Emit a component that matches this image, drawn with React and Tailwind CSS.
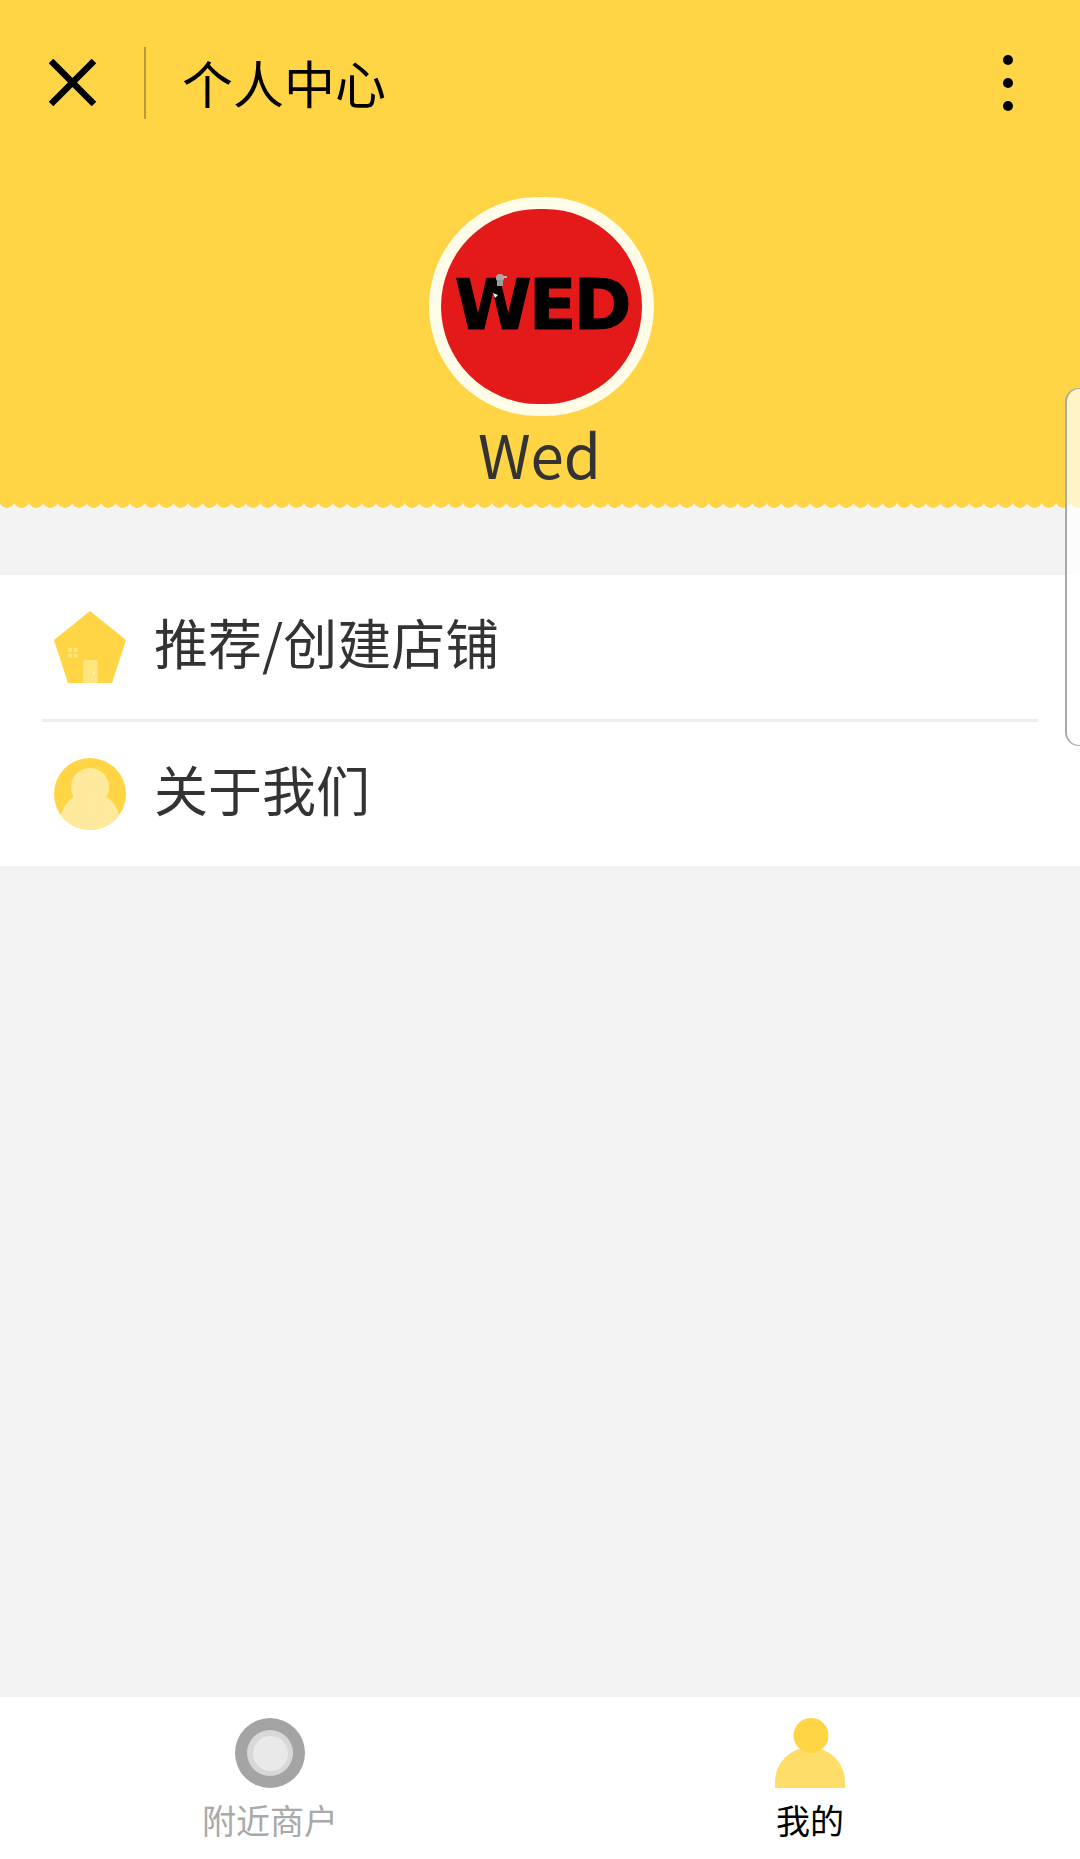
const cjk = { fontFamily: '"Noto Sans CJK SC", "Noto Sans", sans-serif' };

function Row({ icon, label }) {
  return (
    <div className="h-[144px] flex items-center pl-[54px]">
      {icon}
      <span className="ml-[28px] mb-[10px] text-[54px] leading-none text-[#333333]">{label}</span>
    </div>
  );
}

const HouseIcon = (
  <svg width="72" height="72" viewBox="0 0 72 72">
    <path d="M36 0 72 29 58 72H14L0 29Z" fill="#ffd546" />
    <rect x="29" y="49" width="15" height="23" rx="2" fill="#ffe680" />
    <circle cx="40" cy="62" r="1" fill="#fff6c8" />
    <g fill="#ffe680">
      <rect x="14" y="37" width="4" height="4" />
      <rect x="19.5" y="37" width="4" height="4" />
      <rect x="14" y="42.5" width="4" height="4" />
      <rect x="19.5" y="42.5" width="4" height="4" />
    </g>
  </svg>
);

const AboutIcon = (
  <svg width="72" height="72" viewBox="0 0 72 72">
    <defs>
      <clipPath id="about-clip"><circle cx="36" cy="36" r="36" /></clipPath>
    </defs>
    <circle cx="36" cy="36" r="36" fill="#ffd546" />
    <g clipPath="url(#about-clip)" fill="#ffe99d">
      <circle cx="36" cy="64" r="30" />
      <circle cx="36" cy="29" r="19" />
    </g>
  </svg>
);

export default function App() {
  return (
    <div className="relative h-[1859px] flex flex-col bg-[#f3f3f3] overflow-hidden" style={cjk}>
      <header className="h-[500px] bg-[#ffd546] flex flex-col shrink-0">
        <div className="h-[165px] flex items-center pl-[49px] pr-[67px] shrink-0">
          <svg width="47" height="47" viewBox="0 0 47 47" stroke="#000" strokeWidth="6.5" fill="none">
            <path d="M2 2 45 45M45 2 2 45" />
          </svg>
          <div className="ml-[48px] w-[2px] h-[72px] bg-[#b89a3c]" />
          <div className="ml-[36px] text-[51px] leading-none text-black">个人中心</div>
          <div className="ml-auto flex flex-col gap-[13px]">
            <div className="w-[10px] h-[10px] rounded-full bg-black" />
            <div className="w-[10px] h-[10px] rounded-full bg-black" />
            <div className="w-[10px] h-[10px] rounded-full bg-black" />
          </div>
        </div>
        <div className="mt-[32px] ml-[3px] self-center w-[225px] h-[219px] rounded-full bg-[#fffde8] p-[12px] shrink-0">
          <div className="relative w-full h-full rounded-full bg-[#e41a1a] flex items-center justify-center pb-[3px]">
            <span
              className="text-[70px] leading-none font-bold text-black tracking-[-3px] [-webkit-text-stroke:1px_black]"
              style={{ fontFamily: '"DejaVu Sans", sans-serif' }}
            >
              WED
            </span>
            <svg className="absolute left-[51px] top-[64px]" width="16" height="26" viewBox="0 0 16 26">
              <circle cx="8" cy="5" r="4" fill="#a8a8a8" />
              <rect x="5" y="7" width="6" height="6" fill="#9a9a9a" />
              <rect x="11" y="3" width="4" height="2" fill="#b5b5b5" />
              <path d="M1 20 6 22 3 25Z" fill="#f0f0f0" />
            </svg>
          </div>
        </div>
        <div className="mt-[2px] self-center text-[60px] leading-[70px] text-[#333333] ml-[-1px]">Wed</div>
      </header>
      <div className="h-[8px] shrink-0 bg-[radial-gradient(circle_at_7px_0,#ffd546_7.5px,transparent_8px)] bg-[length:14.47px_8px] bg-repeat-x" />

      <section className="mt-[67px] bg-white shrink-0">
        <Row icon={HouseIcon} label="推荐/创建店铺" />
        <div className="mx-[42px] h-[3px] bg-[#eeeeee]" />
        <Row icon={AboutIcon} label="关于我们" />
      </section>

      <div className="flex-1" />

      <nav className="h-[162px] bg-white grid grid-cols-2 shrink-0">
        <div className="flex flex-col items-center pt-[21px]">
          <div className="w-[70px] h-[70px] rounded-full bg-[#a4a4a4] flex items-center justify-center">
            <div className="w-[46px] h-[46px] rounded-full bg-[#d8d8d8] flex items-center justify-center">
              <div className="w-[35px] h-[35px] rounded-full bg-[#e9e9e9]" />
            </div>
          </div>
          <div className="mt-[10px] text-[34px] leading-[44px] text-[#a9a9a9]">附近商户</div>
        </div>
        <div className="flex flex-col items-center pt-[21px]">
          <svg width="70" height="70" viewBox="0 0 70 70">
            <path d="M0 70V64A35 35 0 0 1 70 64V70Z" fill="#ffdd69" />
            <circle cx="36" cy="17.5" r="17.5" fill="#ffd546" />
          </svg>
          <div className="mt-[10px] text-[34px] leading-[44px] text-black">我的</div>
        </div>
      </nav>

      <div className="absolute right-0 top-[388px] w-[15px] h-[358px] bg-white/70 border-l-2 border-y border-[#aaaaaa] rounded-l-[14px]" />
    </div>
  );
}
